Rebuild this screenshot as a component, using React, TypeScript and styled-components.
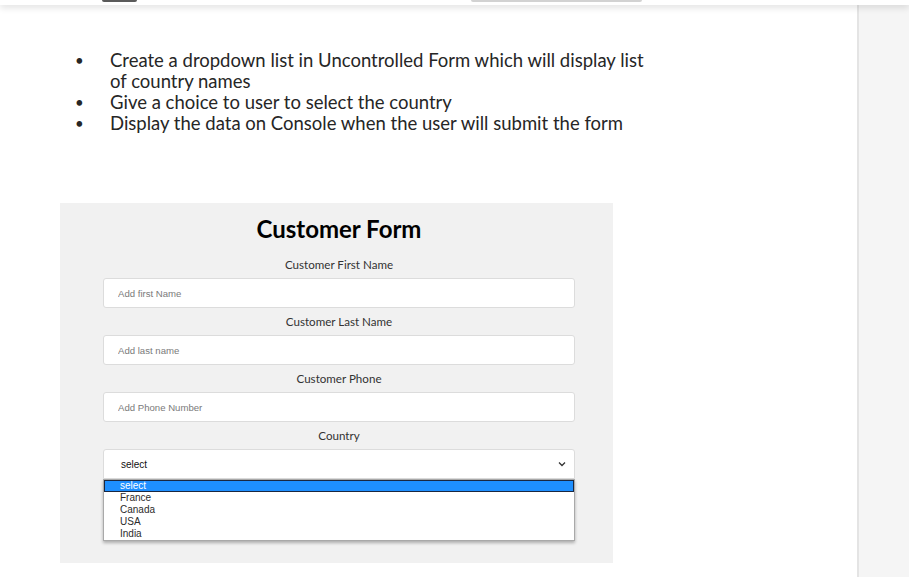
import React from "react";
import styled, { createGlobalStyle } from "styled-components";

const Global = createGlobalStyle`
  html, body { margin: 0; padding: 0; background: #ffffff; }
  body { font-family: "Liberation Sans", Arial, sans-serif; }
  * { box-sizing: border-box; }
`;

const Page = styled.div`
  width: 909px;
  height: 577px;
  display: flex;
  flex-direction: column;
  overflow: hidden;
  background: #ffffff;
`;

const Header = styled.div`
  height: 5px;
  flex: none;
  display: flex;
  align-items: flex-start;
  background: #ffffff;
  position: relative;
  z-index: 2;
  box-shadow: 0 2px 7px rgba(0, 0, 0, 0.16);
`;

const Mark = styled.div<{ $ml: number; $w: number; $dark?: boolean }>`
  margin-left: ${(p) => p.$ml}px;
  width: ${(p) => p.$w}px;
  height: 2px;
  background: ${(p) => (p.$dark ? "#5a5a5a" : "#d2d2d2")};
  border-radius: 0 0 3px 3px;
`;

const Body = styled.div`
  flex: 1;
  display: flex;
  min-height: 0;
`;

const Main = styled.main`
  flex: 1;
  padding-top: 45px;
`;

const Side = styled.aside`
  width: 52px;
  flex: none;
  background: #f5f5f5;
  border-left: 2px solid #e4e4e4;
`;

const Bullets = styled.ul`
  list-style: none;
  margin: 0 0 0 75px;
  padding: 0;
  font-family: Lato, "Open Sans", sans-serif;
  font-size: 18.5px;
  line-height: 21px;
  color: #262626;
`;

const BulletItem = styled.li`
  display: grid;
  grid-template-columns: 35px 545px;
`;

const Dot = styled.span`
  font-size: 15px;
  line-height: 21px;
`;

const Card = styled.section`
  margin: 69px 0 0 60px;
  width: 553px;
  height: 360px;
  background: #f1f1f1;
  padding: 11px 38px 0 43px;
  display: flex;
  flex-direction: column;
`;

const Title = styled.h1`
  margin: 0 0 13px;
  font-family: Lato, "Open Sans", sans-serif;
  font-weight: 700;
  font-size: 24px;
  line-height: 30px;
  text-align: center;
  color: #000;
`;

const Field = styled.div`
  display: flex;
  flex-direction: column;
  margin-bottom: 6px;
  position: relative;
`;

const Label = styled.label`
  font-family: Lato, "Open Sans", sans-serif;
  font-size: 11.6px;
  line-height: 16px;
  text-align: center;
  color: #333;
  margin-bottom: 5px;
`;

const Input = styled.input`
  height: 30px;
  width: 100%;
  border: 1px solid #dcdcdc;
  border-radius: 3px;
  background: #fff;
  padding: 0 0 0 14px;
  font-family: "Liberation Sans", Arial, sans-serif;
  font-size: 9.6px;
  color: #222;
  outline: none;
  &::placeholder { color: #7a7a7a; }
`;

const SelectWrap = styled.div`
  position: relative;
`;

const SelectBox = styled.div`
  height: 30px;
  width: 100%;
  border: 1px solid #dcdcdc;
  border-radius: 3px 3px 0 0;
  background: #fff;
  padding: 0 8px 0 17px;
  display: flex;
  align-items: center;
  justify-content: space-between;
  font-family: "Liberation Sans", Arial, sans-serif;
  font-size: 10px;
  color: #111;
`;

const Dropdown = styled.ul`
  position: absolute;
  left: 0;
  right: 0;
  top: 100%;
  margin: 0;
  padding: 0;
  list-style: none;
  background: #fff;
  border: 1px solid #a9a9a9;
  box-shadow: 0 2px 3px rgba(0, 0, 0, 0.28);
  z-index: 3;
`;

const Option = styled.li<{ $active?: boolean }>`
  height: 12px;
  line-height: 11px;
  padding-left: 16px;
  font-family: "Liberation Sans", Arial, sans-serif;
  font-size: 10px;
  color: ${(p) => (p.$active ? "#ffffff" : "#2b2b2b")};
  background: ${(p) => (p.$active ? "#1e8fff" : "transparent")};
  box-shadow: ${(p) => (p.$active ? "inset 0 0 0 1px #1a2740" : "none")};
`;

const Chevron = () => (
  <svg width="8" height="6" viewBox="0 0 8 6" fill="none">
    <path d="M1 1.5 L4 4.5 L7 1.5" stroke="#333" strokeWidth="1.3" />
  </svg>
);

const bullets = [
  "Create a dropdown list in Uncontrolled Form which will display list of country names",
  "Give a choice to user to select the country",
  "Display the data on Console when the user will submit the form",
];

const countries = ["select", "France", "Canada", "USA", "India"];

export default function App() {
  return (
    <Page>
      <Global />
      <Header>
        <Mark $ml={102} $w={35} $dark />
        <Mark $ml={334} $w={171} />
      </Header>
      <Body>
        <Main>
          <Bullets>
            {bullets.map((b) => (
              <BulletItem key={b}>
                <Dot>•</Dot>
                <span>{b}</span>
              </BulletItem>
            ))}
          </Bullets>
          <Card>
            <Title>Customer Form</Title>
            <Field>
              <Label>Customer First Name</Label>
              <Input placeholder="Add first Name" />
            </Field>
            <Field>
              <Label>Customer Last Name</Label>
              <Input placeholder="Add last name" />
            </Field>
            <Field>
              <Label>Customer Phone</Label>
              <Input placeholder="Add Phone Number" />
            </Field>
            <Field>
              <Label>Country</Label>
              <SelectWrap>
                <SelectBox>
                  <span>select</span>
                  <Chevron />
                </SelectBox>
                <Dropdown>
                  {countries.map((c, i) => (
                    <Option key={c} $active={i === 0}>
                      {c}
                    </Option>
                  ))}
                </Dropdown>
              </SelectWrap>
            </Field>
          </Card>
        </Main>
        <Side />
      </Body>
    </Page>
  );
}
